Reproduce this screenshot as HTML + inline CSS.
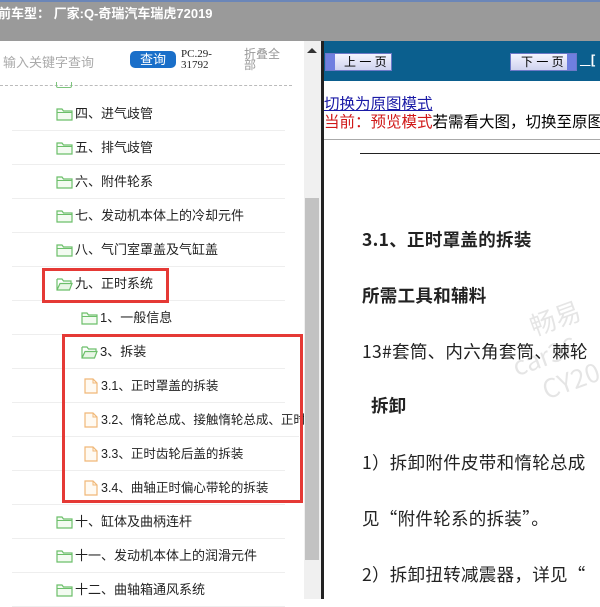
<!DOCTYPE html>
<html><head><meta charset="utf-8"><style>
*{margin:0;padding:0;box-sizing:border-box}
body{width:600px;height:599px;overflow:hidden;background:#fff;font-family:"Liberation Sans","Noto Sans CJK SC",sans-serif;position:relative}
.a{position:absolute}
.top{left:0;top:0;width:600px;height:41px;background:#9a9a9a;border-top:2px solid #6b86b8}
.top span{position:absolute;left:-2px;top:1px;color:#fff;font-size:13px;font-weight:bold}
.row{position:absolute;left:0;width:290px;height:34px;font-size:13px;color:#222;line-height:34px;white-space:nowrap}
.row:after{content:"";position:absolute;left:12px;right:5px;bottom:0;border-bottom:1px solid #eee}
.ic{position:absolute;top:10px}
.txt{position:absolute;top:0}
.box{position:absolute;border:3px solid #e53935}
.btn{position:absolute;height:18px;background:linear-gradient(#f4f4ff,#cfd3ee);border:1px solid #6c78c8;font-size:12px;line-height:16px;color:#000}
.btn i{position:absolute;top:0;width:9px;height:16px;background:#6f7fe0}
.r{position:absolute;left:362px;font-size:17.5px;color:#222;white-space:nowrap;font-family:"Noto Sans CJK SC",sans-serif;letter-spacing:0.3px}
</style></head><body>
<div class="a top"><span>前车型： 厂家:Q-奇瑞汽车瑞虎72019</span></div>
<div class="a" style="left:0;top:41px;width:304px;height:558px;background:#fff"></div>
<div class="a" style="left:3px;top:52px;font-size:13px;color:#aaa">输入关键字查询</div>
<div class="a" style="left:130px;top:51px;width:46px;height:17px;background:#1a6fc9;border-radius:5px;color:#fff;font-size:13px;line-height:17px;text-align:center">查询</div>
<div class="a" style="left:181px;top:49px;font-size:11px;line-height:11px;font-family:'Liberation Serif',serif;color:#222">PC.29-<br>31792</div>
<div class="a" style="left:244px;top:49px;font-size:12px;line-height:11px;color:#999;width:40px">折叠全<br>部</div>
<div class="a" style="left:0;top:85px;width:292px;border-top:1px dashed #bbb"></div>
<div class="a" style="left:56px;top:82px;width:16px;height:6px;border:1px solid #7cc47c;border-top:none;border-radius:0 0 2px 2px"></div>

<div class="a" style="left:304px;top:41px;width:17px;height:558px;background:#f0f0f0"></div>
<div class="a" style="left:307px;top:48px;width:0;height:0;border-left:5px solid transparent;border-right:5px solid transparent;border-bottom:5px solid #333"></div>
<div class="a" style="left:305px;top:198px;width:14px;height:362px;background:#c2c2c2"></div>
<div class="a" style="left:321px;top:41px;width:3px;height:558px;background:#222"></div>

<svg width="0" height="0" style="position:absolute"><defs>
<symbol id="fo" viewBox="0 0 17 14"><path d="M1 2h5l1.5 2H16v9H1z" fill="#f3fbf1" stroke="#6cbf6a" stroke-width="1.2"/><path d="M1 5.5h15" stroke="#6cbf6a" stroke-width="1"/></symbol>
<symbol id="fop" viewBox="0 0 17 14"><path d="M1 2h5l1.5 2H15v3" fill="none" stroke="#6cbf6a" stroke-width="1.2"/><path d="M1 2v11h12.5L16 6.5H4L1 13" fill="#e8f6e5" stroke="#6cbf6a" stroke-width="1.2"/></symbol>
<symbol id="fi" viewBox="0 0 14 16"><path d="M1 1h8l4 4v10H1z" fill="#fffaf2" stroke="#f0b878" stroke-width="1.2"/><path d="M9 1v4h4" fill="none" stroke="#f0b878" stroke-width="1"/></symbol>
</defs></svg>

<div class="row" style="top:97px"><svg class="ic" style="left:56px" width="17" height="14"><use href="#fo"/></svg><span class="txt" style="left:75px">四、进气歧管</span></div>
<div class="row" style="top:131px"><svg class="ic" style="left:56px" width="17" height="14"><use href="#fo"/></svg><span class="txt" style="left:75px">五、排气歧管</span></div>
<div class="row" style="top:165px"><svg class="ic" style="left:56px" width="17" height="14"><use href="#fo"/></svg><span class="txt" style="left:75px">六、附件轮系</span></div>
<div class="row" style="top:199px"><svg class="ic" style="left:56px" width="17" height="14"><use href="#fo"/></svg><span class="txt" style="left:75px">七、发动机本体上的冷却元件</span></div>
<div class="row" style="top:233px"><svg class="ic" style="left:56px" width="17" height="14"><use href="#fo"/></svg><span class="txt" style="left:75px">八、气门室罩盖及气缸盖</span></div>
<div class="row" style="top:267px"><svg class="ic" style="left:56px" width="17" height="14"><use href="#fop"/></svg><span class="txt" style="left:75px">九、正时系统</span></div>
<div class="row" style="top:301px"><svg class="ic" style="left:81px" width="17" height="14"><use href="#fo"/></svg><span class="txt" style="left:100px">1、一般信息</span></div>
<div class="row" style="top:335px"><svg class="ic" style="left:81px" width="17" height="14"><use href="#fop"/></svg><span class="txt" style="left:100px">3、拆装</span></div>
<div class="row" style="top:369px"><svg class="ic" style="left:84px;top:9px" width="14" height="16"><use href="#fi"/></svg><span class="txt" style="left:101px;font-size:12.5px">3.1、正时罩盖的拆装</span></div>
<div class="row" style="top:403px;overflow:hidden;width:304px"><svg class="ic" style="left:84px;top:9px" width="14" height="16"><use href="#fi"/></svg><span class="txt" style="left:101px;font-size:12.5px">3.2、惰轮总成、接触惰轮总成、正时</span></div>
<div class="row" style="top:437px"><svg class="ic" style="left:84px;top:9px" width="14" height="16"><use href="#fi"/></svg><span class="txt" style="left:101px;font-size:12.5px">3.3、正时齿轮后盖的拆装</span></div>
<div class="row" style="top:471px"><svg class="ic" style="left:84px;top:9px" width="14" height="16"><use href="#fi"/></svg><span class="txt" style="left:101px;font-size:12.5px">3.4、曲轴正时偏心带轮的拆装</span></div>
<div class="row" style="top:505px"><svg class="ic" style="left:56px" width="17" height="14"><use href="#fo"/></svg><span class="txt" style="left:75px">十、缸体及曲柄连杆</span></div>
<div class="row" style="top:539px"><svg class="ic" style="left:56px" width="17" height="14"><use href="#fo"/></svg><span class="txt" style="left:75px">十一、发动机本体上的润滑元件</span></div>
<div class="row" style="top:573px"><svg class="ic" style="left:56px" width="17" height="14"><use href="#fo"/></svg><span class="txt" style="left:75px">十二、曲轴箱通风系统</span></div>

<div class="box" style="left:42px;top:268px;width:127px;height:35px"></div>
<div class="box" style="left:62px;top:334px;width:241px;height:169px"></div>

<div class="a" style="left:324px;top:41px;width:276px;height:40px;background:#0b5f8e"></div>
<div class="btn" style="left:325px;top:53px;width:67px"><i style="left:0"></i><span style="position:absolute;left:18px">上 一 页</span></div>
<div class="btn" style="left:510px;top:53px;width:67px"><span style="position:absolute;left:10px">下 一 页</span><i style="right:0"></i></div>
<div class="a" style="left:580px;top:52px;color:#fff;font-size:13px;font-weight:bold;text-decoration:underline">_ [</div>
<div class="a" style="left:324px;top:92px;font-size:15.5px;color:#1a1aa6;text-decoration:underline;white-space:nowrap">切换为原图模式</div>
<div class="a" style="left:324px;top:110px;font-size:15.5px;white-space:nowrap"><span style="color:#d01818">当前：预览模式</span>若需看大图，切换至原图</div>
<div class="a" style="left:324px;top:139px;width:276px;border-top:1px solid #aaa"></div>
<div class="a" style="left:360px;top:153px;width:240px;border-top:1px solid #222"></div>

<div class="r" style="top:227px;font-weight:bold">3.1、正时罩盖的拆装</div>
<div class="r" style="top:283px;font-weight:bold">所需工具和辅料</div>
<div class="r" style="top:339px">13#套筒、内六角套筒、棘轮</div>
<div class="r" style="left:371px;top:393px;font-weight:bold">拆卸</div>
<div class="r" style="top:450px">1）拆卸附件皮带和惰轮总成</div>
<div class="r" style="top:506px">见“附件轮系的拆装”。</div>
<div class="r" style="top:562px">2）拆卸扭转减震器，详见“</div>
<div class="a" style="left:540px;top:300px;color:rgba(0,0,0,0.1);font-size:26px;transform:rotate(-20deg);white-space:nowrap;font-family:'Noto Sans CJK SC',sans-serif;line-height:32px">畅易<br><span style="margin-left:-30px">car36</span><br><span style="margin-left:-10px">CY20</span></div>
</body></html>
